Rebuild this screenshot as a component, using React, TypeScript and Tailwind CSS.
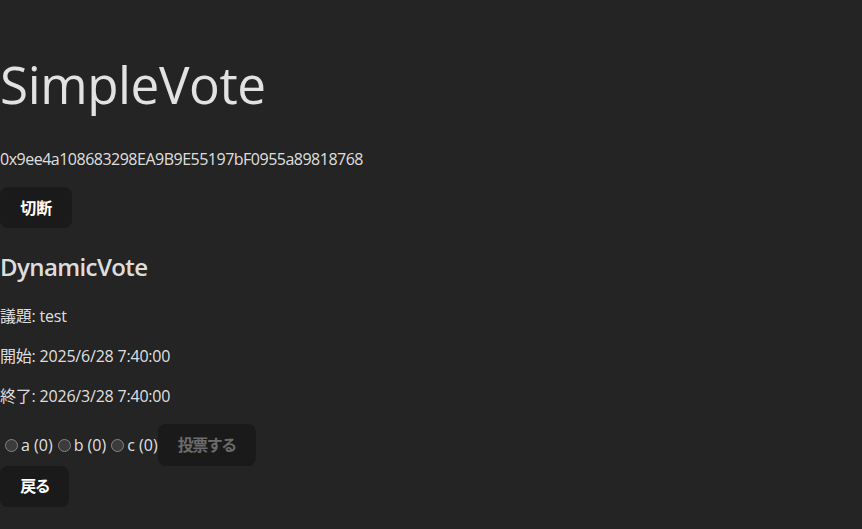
import React, { useState } from 'react';

const options = [
    { id: 'a', label: 'a', count: 0 },
    { id: 'b', label: 'b', count: 0 },
    { id: 'c', label: 'c', count: 0 },
];

const btn =
    'inline-block rounded-lg border border-transparent bg-[#1a1a1a] px-[19.2px] py-[9.6px] text-base leading-[20px] font-semibold';

export default function App() {
    const [choice, setChoice] = useState<string | null>(null);

    return (
        <div
            className="min-h-screen bg-[#242424] pt-[22px] text-[rgba(255,255,255,0.87)] flow-root"
            style={{ fontFamily: '"Open Sans", "Noto Sans CJK JP", sans-serif' }}
        >
            <h1 className="mt-[34.3px] mb-[34.3px] text-[51.2px] leading-[1.1] font-normal tracking-[-0.4px]">SimpleVote</h1>
            <p className="my-4 text-base leading-6 tracking-[-0.5px]">0x9ee4a108683298EA9B9E55197bF0955a89818768</p>
            <button className={`${btn} text-white`}>切断</button>

            <h2 className="mt-[20.5px] mb-[19.9px] text-2xl leading-9 font-semibold tracking-[-0.6px]">DynamicVote</h2>
            <p className="my-4 leading-6 tracking-[-0.2px]">議題: test</p>
            <p className="my-4 leading-6 tracking-[-0.2px]">開始: 2025/6/28 7:40:00</p>
            <p className="my-4 leading-6 tracking-[-0.2px]">終了: 2026/3/28 7:40:00</p>

            <div className="mt-4 leading-6">
                {options.map((o) => (
                    <label key={o.id} className="inline">
                        <input
                            type="radio"
                            name="vote"
                            checked={choice === o.id}
                            onChange={() => setChoice(o.id)}
                            className="ml-[5px] mr-[3px] mt-[3px] inline-block h-[13px] w-[13px] appearance-none rounded-full border border-[#858585] bg-[#3b3b3b] align-[-1px]"
                        />
                        {o.label} ({o.count})
                    </label>
                ))}
                <button disabled className={`${btn} cursor-not-allowed tracking-[-1.5px] text-[#6b6b6b]`}>
                    投票する
                </button>
            </div>
            <button className={`${btn} tracking-[-1.5px] text-white`}>戻る</button>
        </div>
    );
}
